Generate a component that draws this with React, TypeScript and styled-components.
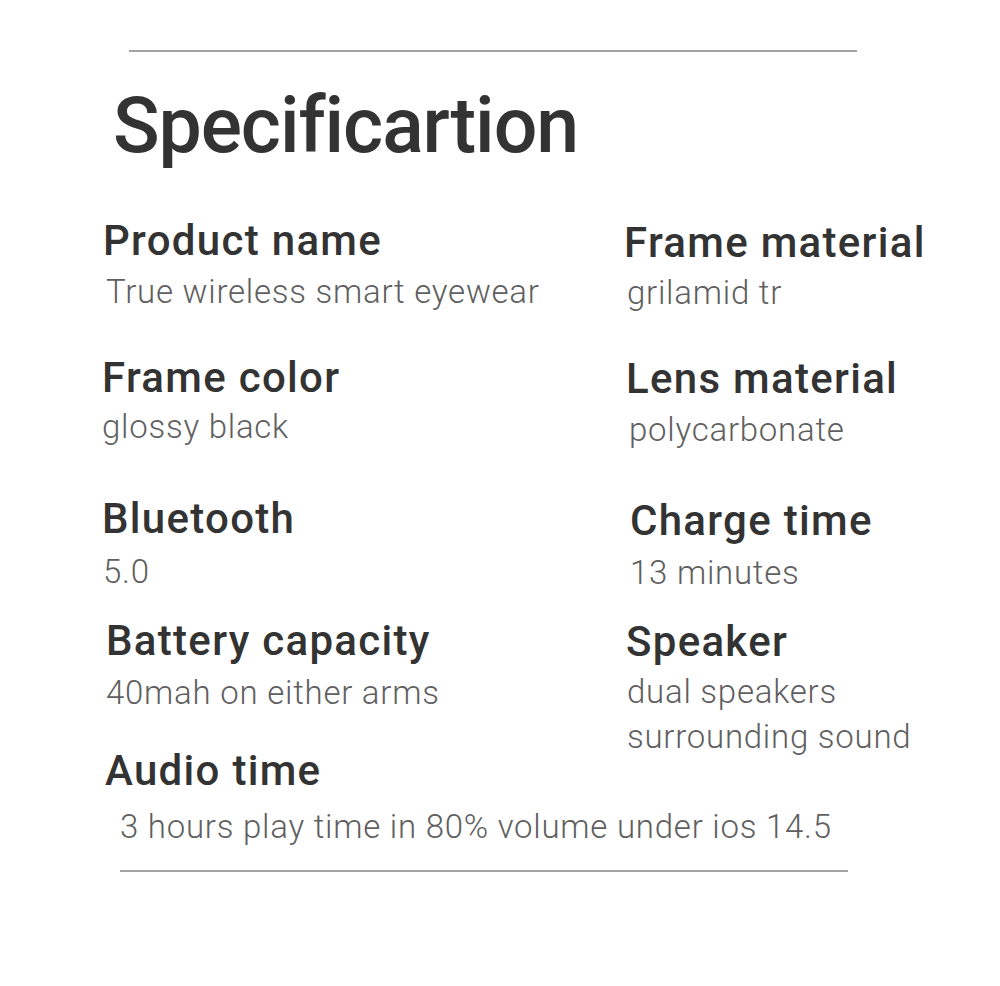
import React from "react";
import styled, { createGlobalStyle } from "styled-components";

const Global = createGlobalStyle`
  html, body { margin: 0; padding: 0; background: #ffffff; }
  body { font-family: Roboto, "Noto Sans", "DejaVu Sans", sans-serif; }
`;

const Sheet = styled.main`
  width: 1000px;
  height: 986px;
  padding-top: 50px;
  box-sizing: border-box;
  background: #fff;
`;

const Rule = styled.hr<{ $left: number; $top?: number }>`
  margin: ${(p) => p.$top ?? 0}px 0 0 ${(p) => p.$left}px;
  width: 728px;
  height: 2px;
  border: 0;
  background: #a4a4a4;
`;

const Title = styled.h1`
  margin: 29px 0 0 113px;
  font-size: 77px;
  line-height: 90px;
  font-weight: 500;
  color: #333;
  letter-spacing: -1.1px;
`;

const Columns = styled.section`
  display: grid;
  grid-template-columns: 522px 1fr;
  margin-top: 46px;
  padding-left: 102px;
  align-items: start;
`;

const Column = styled.div`
  display: flex;
  flex-direction: column;
`;

const Spec = styled.div<{ $top: number; $x: number }>`
  margin-top: ${(p) => p.$top}px;
  padding-left: ${(p) => p.$x}px;
  display: flex;
  flex-direction: column;
`;

const Label = styled.div`
  font-size: 42px;
  line-height: 48px;
  font-weight: 500;
  letter-spacing: 1.3px;
  color: #333;
  white-space: nowrap;
`;

const Value = styled.div<{ $gap: number; $x: number }>`
  margin-top: ${(p) => p.$gap}px;
  padding-left: ${(p) => p.$x}px;
  font-size: 33px;
  line-height: 45px;
  font-weight: 300;
  letter-spacing: 0.75px;
  color: #5f5f5f;
  white-space: nowrap;
`;

type Item = {
  label: string;
  values: string[];
  top: number;
  x: number;
  gap: number;
  vx: number;
};

const left: Item[] = [
  { label: "Product name", values: ["True wireless smart eyewear"], top: 0, x: 1, gap: 4, vx: 3 },
  { label: "Frame color", values: ["glossy black"], top: 40, x: -2, gap: 2, vx: 0 },
  { label: "Bluetooth", values: ["5.0"], top: 46, x: -2, gap: 6, vx: 1 },
  { label: "Battery capacity", values: ["40mah on either arms"], top: 23, x: 4, gap: 5, vx: -2 },
  { label: "Audio time", values: ["3 hours play time in 80% volume under ios 14.5"], top: 32, x: 3, gap: 9, vx: 15 },
];

const right: Item[] = [
  { label: "Frame material", values: ["grilamid tr"], top: 2, x: 0, gap: 3, vx: 3 },
  { label: "Lens material", values: ["polycarbonate"], top: 40, x: 2, gap: 4, vx: 3 },
  { label: "Charge time", values: ["13 minutes"], top: 45, x: 6, gap: 5, vx: -1 },
  { label: "Speaker", values: ["dual speakers", "surrounding sound"], top: 23, x: 2, gap: 3, vx: 1 },
];

function SpecList({ items }: { items: Item[] }) {
  return (
    <Column>
      {items.map((it) => (
        <Spec key={it.label} $top={it.top} $x={it.x}>
          <Label>{it.label}</Label>
          {it.values.map((v, i) => (
            <Value key={v} $gap={i === 0 ? it.gap : 0} $x={it.vx}>
              {v}
            </Value>
          ))}
        </Spec>
      ))}
    </Column>
  );
}

export default function App() {
  return (
    <>
      <Global />
      <Sheet>
        <Rule $left={129} />
        <Title>Specificartion</Title>
        <Columns>
          <SpecList items={left} />
          <SpecList items={right} />
        </Columns>
        <Rule $left={120} $top={21} />
      </Sheet>
    </>
  );
}
